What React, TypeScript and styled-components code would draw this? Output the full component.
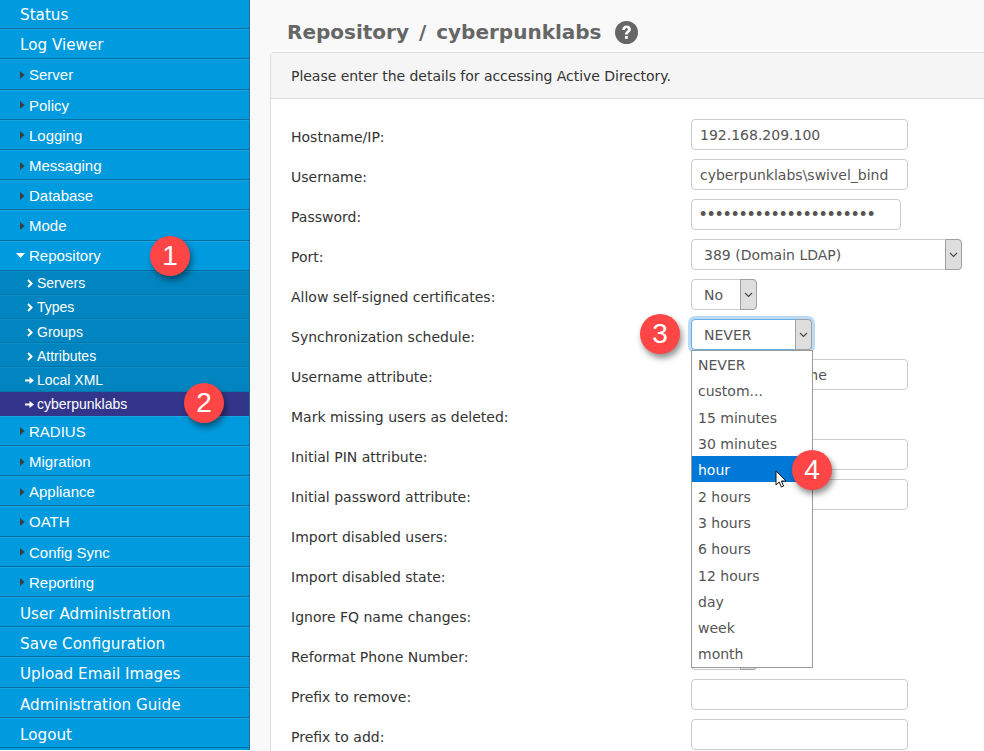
import React from "react";
import styled, { createGlobalStyle } from "styled-components";

const Global = createGlobalStyle`
  html, body { margin: 0; padding: 0; height: 751px; overflow: hidden; background: #f9f9f9; }
  * { box-sizing: border-box; }
  body { font-family: "DejaVu Sans", Verdana, sans-serif; }
`;
const Page = styled.div`
  display: flex; width: 984px; height: 751px; overflow: hidden; position: relative;
`;
const Sidebar = styled.nav`
  flex: 0 0 250px; height: 751px; background: #009ade; border-right: 1px solid #1a6f96;
  overflow: hidden; margin-top: -1px;
`;
const Row = styled.div`
  height: 30.2px; display: flex; align-items: center; color: #fff;
  border-bottom: 1px solid #006f9f; box-shadow: inset 0 1px 0 #19a6e4;
  padding: 3px 0 0 20px;
  font: 15.2px "DejaVu Sans", Verdana, sans-serif;
`;
const TailRow = styled(Row)`
  padding-top: 5px;
`;
const TreeRow = styled(Row)<{ $open?: boolean }>`
  font: 15px "Liberation Sans", Arial, sans-serif; padding: ${(p) => (p.$open ? "0" : "2px")} 0 0 20px;
`;
const Caret = styled.span`
  width: 9px; display: inline-flex; justify-content: flex-start;
`;
const DownCaret = styled.svg`
  width: 9px; height: 5px; margin: 0 4px 0 -4px;
`;
const SubList = styled.div`
  background: #0085c0;
`;
const SubRow = styled.div<{ $active?: boolean }>`
  height: 24.2px; display: flex; align-items: center; color: #fff; padding: 2px 0 0 25px;
  font: 14px "Liberation Sans", Arial, sans-serif;
  background: ${(p) => (p.$active ? "#33358a" : "transparent")};
  border-bottom: 1px solid ${(p) => (p.$active ? "#33358a" : "#0076ab")};
  box-shadow: inset 0 1px 0 ${(p) => (p.$active ? "#33358a" : "#0a8fc9")};
`;
const ArrowIcon = styled.svg`
  width: 9px; height: 9px; margin-right: 3px; flex: none;
`;
const ChevIcon = styled.svg`
  width: 6px; height: 9px; margin: 1px 4px 0 2px; flex: none;
`;
const Main = styled.main`
  flex: 1; padding: 20px 0 0 20px; min-width: 0;
`;
const Title = styled.h1`
  margin: 0; height: 32px; display: flex; align-items: center; padding-left: 17px;
  font: bold 20px "DejaVu Sans", Verdana, sans-serif; color: #666;
  word-spacing: 3px; position: relative; top: -4px;
`;
const Help = styled.svg`
  width: 23px; height: 23px; margin-left: 13px; flex: none;
`;
const Panel = styled.section`
  width: 730px; background: #fff; border: 1px solid #ddd; border-radius: 4px 0 0 0; border-right: 0;
  height: 720px;
`;
const PanelHead = styled.div`
  height: 46px; background: #f5f5f5; border-bottom: 1px solid #ddd; padding-left: 20px;
  display: flex; align-items: center; font-size: 14px; color: #333; letter-spacing: -0.035px;
`;
const Form = styled.div`
  padding: 20px 0 0 20px;
`;
const FormRow = styled.div`
  height: 40px; display: flex; align-items: flex-start;
`;
const Label = styled.label`
  flex: 0 0 400px; height: 31px; display: flex; align-items: center; padding-top: 4px;
  font-size: 14px; color: #333;
`;
const Input = styled.input<{ $w?: number }>`
  width: ${(p) => p.$w ?? 217}px; height: 31px; border: 1px solid #ccc; border-radius: 4px;
  padding: 0 8px; font: 14px "DejaVu Sans", Verdana, sans-serif; color: #555; background: #fff; outline: none;
`;
const PasswordInput = styled(Input)`
  font: 18px "Liberation Sans", Arial, sans-serif; letter-spacing: 1.7px;
`;
const Select = styled.div<{ $w: number; $focus?: boolean }>`
  width: ${(p) => p.$w}px; height: 31px; border: 1px solid ${(p) => (p.$focus ? "#66afe9" : "#ccc")}; border-radius: 4px;
  display: flex; align-items: stretch; justify-content: space-between; background: #fff;
  font-size: 14px; color: #555;
  box-shadow: ${(p) => (p.$focus ? "0 0 0 3px rgba(102,175,233,.45)" : "none")};
`;
const SelectText = styled.span`
  padding-left: 12px; display: flex; align-items: center;
`;
const SelectBtn = styled.span`
  width: 17px; margin: -1px -1px -1px 0; background: #dedede; border: 1px solid #a0a0a0; border-radius: 0 4px 4px 0;
  display: flex; align-items: center; justify-content: center;
`;
const Menu = styled.ul`
  position: absolute; left: 691px; top: 350px; width: 122px; height: 318px; margin: 0; padding: 0;
  list-style: none; background: #fff; border: 1px solid #9a9a9a; font-size: 14px; color: #555;
`;
const MenuItem = styled.li<{ $on?: boolean }>`
  height: 26.3px; padding: 2px 0 0 6px; display: flex; align-items: center;
  background: ${(p) => (p.$on ? "#0078d7" : "transparent")}; color: ${(p) => (p.$on ? "#fff" : "#555")};
`;
const Badge = styled.div<{ $x: number; $y: number }>`
  position: absolute; left: ${(p) => p.$x}px; top: ${(p) => p.$y}px; width: 40px; height: 40px; border-radius: 50%;
  background: #ff4545; color: #fff; font: 28px "Liberation Sans", Arial, sans-serif;
  display: flex; align-items: center; justify-content: center;
  box-shadow: 2px 4px 6px rgba(0,0,0,.45);
`;
const Cursor = styled.svg`
  position: absolute; left: 775px; top: 470px; width: 13px; height: 20px;
`;

const Chevron = () => (
  <svg width="9" height="6" viewBox="0 0 9 6"><path d="M1 1l3.5 3.5L8 1" fill="none" stroke="#444" strokeWidth="1.1" /></svg>
);
const Sel = ({ w, t, focus }: { w: number; t: string; focus?: boolean }) => (
  <Select $w={w} $focus={focus}><SelectText>{t}</SelectText><SelectBtn><Chevron /></SelectBtn></Select>
);
const Right = () => (
  <Caret><svg width="5" height="8" viewBox="0 0 5 8"><path d="M0 0l4.5 4L0 8z" fill="#3d3d3d" /></svg></Caret>
);
const Down = () => (
  <DownCaret viewBox="0 0 9 5"><path d="M0 0h9L4.5 5z" fill="#fff" /></DownCaret>
);
const Chev = () => (
  <ChevIcon viewBox="0 0 6 9"><path d="M1 1l3.5 3.5L1 8" fill="none" stroke="#fff" strokeWidth="2" /></ChevIcon>
);
const Arrow = () => (
  <ArrowIcon viewBox="0 0 9 9"><path d="M0 3.5h4.5V1L9 4.5 4.5 8V5.5H0z" fill="#fff" /></ArrowIcon>
);

const tree1 = ["Server", "Policy", "Logging", "Messaging", "Database", "Mode"];
const tree2 = ["RADIUS", "Migration", "Appliance", "OATH", "Config Sync", "Reporting"];
const tail = ["User Administration", "Save Configuration", "Upload Email Images", "Administration Guide", "Logout"];
const opts = ["NEVER", "custom...", "15 minutes", "30 minutes", "hour", "2 hours", "3 hours", "6 hours", "12 hours", "day", "week", "month"];

export default function App() {
  return (
    <Page>
      <Global />
      <Sidebar>
        <Row>Status</Row>
        <Row>Log Viewer</Row>
        {tree1.map((t) => <TreeRow key={t}><Right />{t}</TreeRow>)}
        <TreeRow $open><Down />Repository</TreeRow>
        <SubList>
          {["Servers", "Types", "Groups", "Attributes"].map((t) => <SubRow key={t}><Chev />{t}</SubRow>)}
          <SubRow><Arrow />Local XML</SubRow>
          <SubRow $active><Arrow />cyberpunklabs</SubRow>
        </SubList>
        {tree2.map((t) => <TreeRow key={t}><Right />{t}</TreeRow>)}
        {tail.map((t) => <TailRow key={t}>{t}</TailRow>)}
      </Sidebar>
      <Main>
        <Title>
          Repository / cyberpunklabs
          <Help viewBox="0 0 24 24">
            <circle cx="12" cy="12" r="12" fill="#666" />
            <path d="M7.6 9.3c0-2.9 2-4.6 4.6-4.6s4.4 1.6 4.4 3.9c0 3.2-3.2 3.2-3.2 5.6h-3c0-3.5 3-3.5 3-5.4 0-.8-.6-1.4-1.3-1.4-.9 0-1.5.6-1.6 1.9z" fill="#fff" />
            <rect x="10.4" y="15.6" width="3" height="3" fill="#fff" />
          </Help>
        </Title>
        <Panel>
          <PanelHead>Please enter the details for accessing Active Directory.</PanelHead>
          <Form>
            <FormRow><Label>Hostname/IP:</Label><Input readOnly value="192.168.209.100" /></FormRow>
            <FormRow><Label>Username:</Label><Input readOnly value="cyberpunklabs\swivel_bind" /></FormRow>
            <FormRow><Label>Password:</Label><PasswordInput $w={210} readOnly type="password" value="aaaaaaaaaaaaaaaaaaaaaa" /></FormRow>
            <FormRow><Label>Port:</Label><Sel w={271} t="389 (Domain LDAP)" /></FormRow>
            <FormRow><Label>Allow self-signed certificates:</Label><Sel w={66} t="No" /></FormRow>
            <FormRow><Label>Synchronization schedule:</Label><Sel w={121} t="NEVER" focus /></FormRow>
            <FormRow><Label>Username attribute:</Label><Input readOnly value="sAMAccountName" /></FormRow>
            <FormRow><Label>Mark missing users as deleted:</Label><Sel w={66} t="No" /></FormRow>
            <FormRow><Label>Initial PIN attribute:</Label><Input readOnly /></FormRow>
            <FormRow><Label>Initial password attribute:</Label><Input readOnly /></FormRow>
            <FormRow><Label>Import disabled users:</Label><Sel w={66} t="No" /></FormRow>
            <FormRow><Label>Import disabled state:</Label><Sel w={66} t="No" /></FormRow>
            <FormRow><Label>Ignore FQ name changes:</Label><Sel w={66} t="No" /></FormRow>
            <FormRow><Label>Reformat Phone Number:</Label><Sel w={66} t="No" /></FormRow>
            <FormRow><Label>Prefix to remove:</Label><Input readOnly /></FormRow>
            <FormRow><Label>Prefix to add:</Label><Input readOnly /></FormRow>
          </Form>
        </Panel>
      </Main>
      <Menu>
        {opts.map((o) => <MenuItem key={o} $on={o === "hour"}>{o}</MenuItem>)}
      </Menu>
      <Badge $x={150} $y={236}>1</Badge>
      <Badge $x={184} $y={383}>2</Badge>
      <Badge $x={640} $y={314}>3</Badge>
      <Badge $x={792} $y={450}>4</Badge>
      <Cursor viewBox="0 0 13 20">
        <path d="M1 1v14l3.2-3 2.2 5 2.2-1-2.2-5H11z" fill="#fff" stroke="#111" strokeWidth="1" />
      </Cursor>
    </Page>
  );
}
